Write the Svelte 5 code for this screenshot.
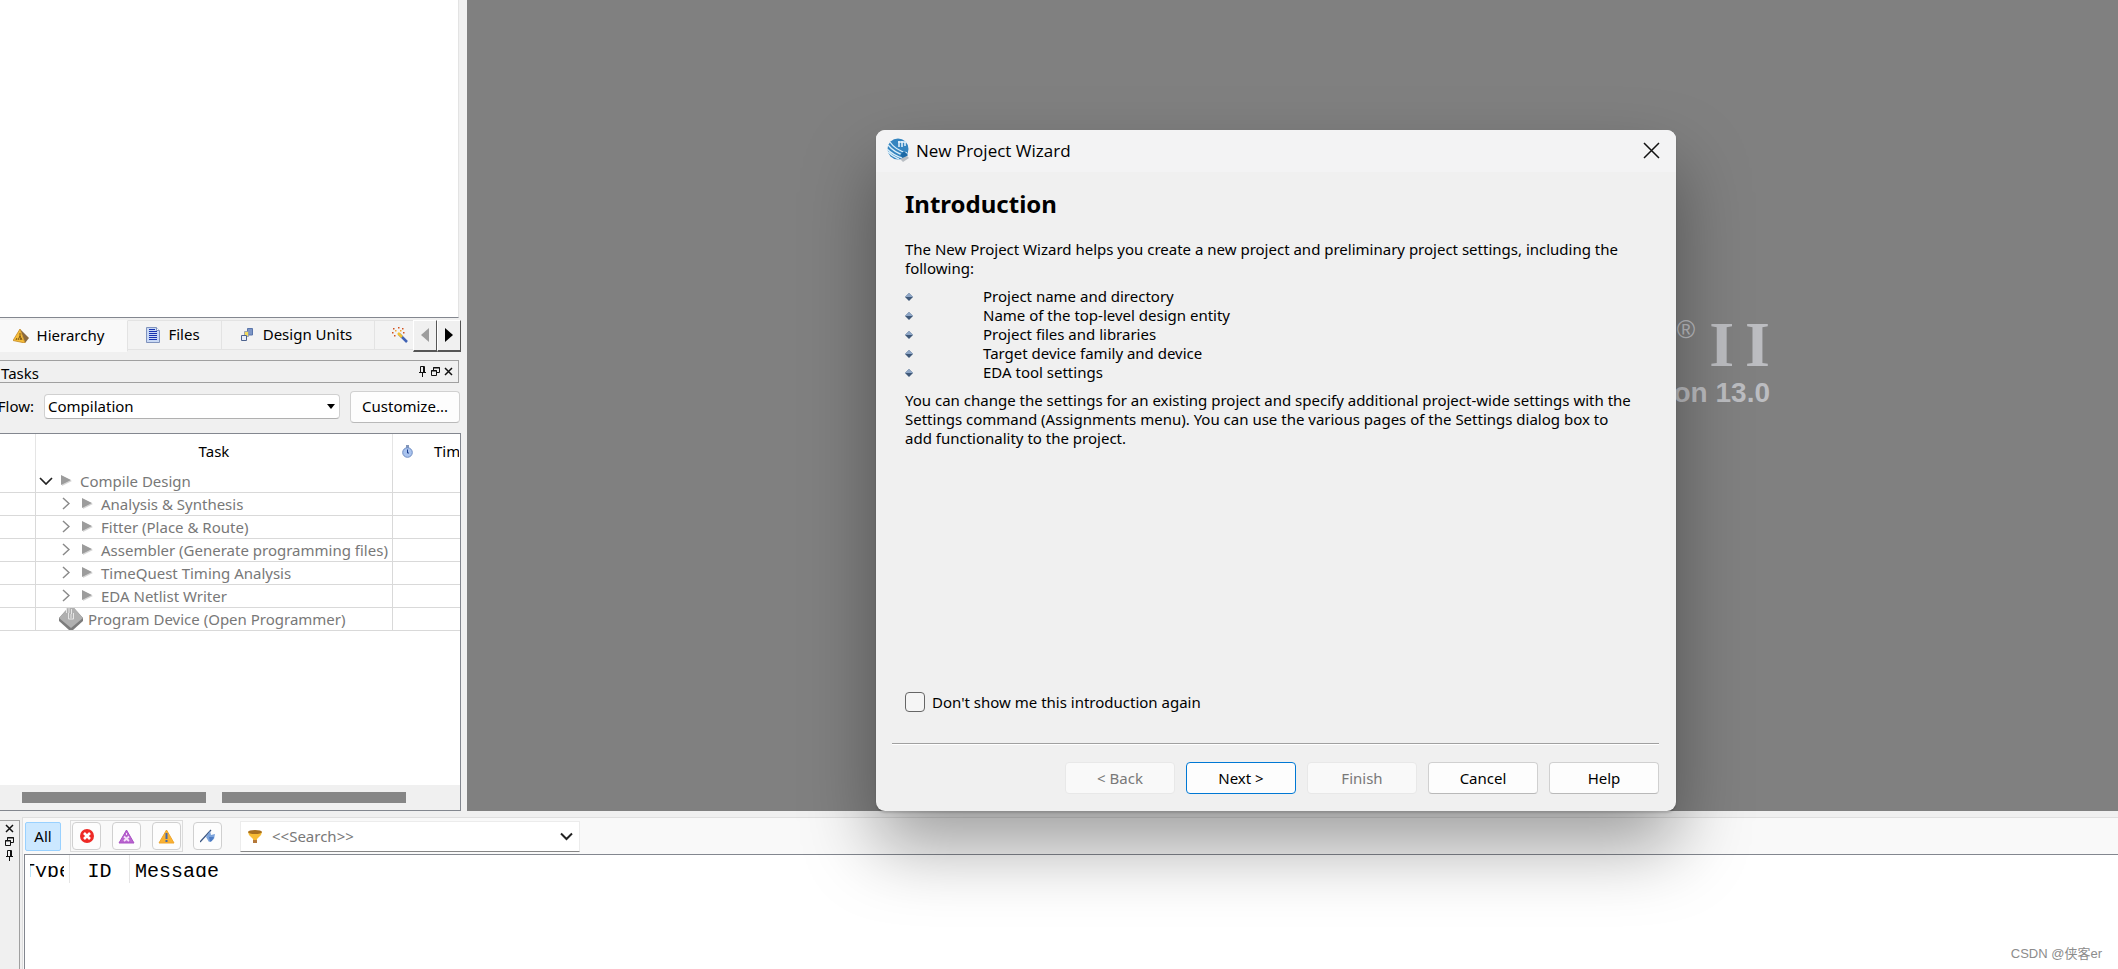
<script lang="ts">
    type Task = { name: string; kind: 'root' | 'step' | 'device' };

    const tasks: Task[] = [
        { name: 'Compile Design', kind: 'root' },
        { name: 'Analysis & Synthesis', kind: 'step' },
        { name: 'Fitter (Place & Route)', kind: 'step' },
        { name: 'Assembler (Generate programming files)', kind: 'step' },
        { name: 'TimeQuest Timing Analysis', kind: 'step' },
        { name: 'EDA Netlist Writer', kind: 'step' },
        { name: 'Program Device (Open Programmer)', kind: 'device' }
    ];

    const topics = [
        'Project name and directory',
        'Name of the top-level design entity',
        'Project files and libraries',
        'Target device family and device',
        'EDA tool settings'
    ];

    let flow = $state('Compilation');
    let search = $state('');
    let skipIntro = $state(false);
    let activeTab = $state('hierarchy');
    let activeFilter = $state('all');
</script>

{#snippet pinIcon()}
    <svg width="9" height="11" viewBox="0 0 9 11" aria-hidden="true">
        <path d="M2.5 6V.5h4V6M5.500 .5V6M1 6.500h7M4.500 6.500V11" fill="none" stroke="#111" />
    </svg>
{/snippet}

{#snippet floatIcon()}
    <svg width="9" height="9" viewBox="0 0 9 9" aria-hidden="true">
        <path d="M2.5 3V.5h6v5H6M2 1h7M.5 3.5h5v5h-5zM0 4h6" fill="none" stroke="#111" />
    </svg>
{/snippet}

{#snippet closeIcon()}
    <svg width="9" height="9" viewBox="0 0 9 9" aria-hidden="true">
        <path d="M1 1l7 7M8 1L1 8" fill="none" stroke="#111" stroke-width="1.5" />
    </svg>
{/snippet}

<div class="app">
    <div class="upper">
        <aside class="side">
            <div class="tree"></div>

            <div class="tabs">
                <button class="tab hierarchy" class:active={activeTab === 'hierarchy'} onclick={() => (activeTab = 'hierarchy')}>
                    <svg width="16" height="14" viewBox="0 0 16 14" aria-hidden="true">
                        <path d="M7 0l9 9-4 5z" fill="#8a6a40" />
                        <path d="M7 0L0 11.500l12 2.500z" fill="#f6bd3a" stroke="#c48a24" stroke-width=".8" />
                        <path d="M7 4v3M7 7l-2 4M7 7l2 4M4 9l-1 2M8 9l-1 2" stroke="#5b3a08" stroke-width=".8" fill="none" />
                    </svg>
                    Hierarchy
                </button>
                <button class="tab files" class:active={activeTab === 'files'} onclick={() => (activeTab = 'files')}>
                    <svg width="14" height="16" viewBox="0 0 14 16" aria-hidden="true">
                        <path d="M.5.5h10l3 3v12H.5z" fill="#c9d9f5" stroke="#8093bd" />
                        <path d="M10.500 .5v3h3" fill="#fff" stroke="#8093bd" />
                        <path d="M3 2.500h6M3 4.500h8M3 6.500h8M3 8.500h8M3 10.500h8M3 12.500h8" stroke="#1733b0" />
                    </svg>
                    Files
                </button>
                <button class="tab units" class:active={activeTab === 'units'} onclick={() => (activeTab = 'units')}>
                    <svg width="12" height="13" viewBox="0 0 12 13" aria-hidden="true">
                        <path d="M6.500 .5h5V7h-5z" fill="#7c95c6" stroke="#5b76ab" />
                        <path d="M3.500 3.500h4v5h-4z" fill="#f5dc5e" stroke="#8796b5" stroke-width=".8" />
                        <path d="M.5 7.500h5v5h-5z" fill="#e9effa" stroke="#4d638e" />
                    </svg>
                    Design Units
                </button>
                <button class="tab wand" aria-label="IP Components">
                    <svg width="16" height="16" viewBox="0 0 16 16" aria-hidden="true">
                        <path d="M7 7l8 8" stroke="#3f62b5" stroke-width="2.500" />
                        <path d="M6 6l4 4" stroke="#f2c230" stroke-width="2.500" />
                        <path d="M1 1h1.500v1.500H1zM6 0h1.500v1.500H6zM10 1h1.500v1.500H10zM0 5h1.500v1.500H0zM11 5h1.500v1.500H11zM2 8h1.500v1.500H2z" fill="#d2531f" />
                        <path d="M3 3h1.500v1.500H3zM8 3h1.500v1.500H8z" fill="#f2a630" />
                    </svg>
                </button>
                <button class="scroller" disabled aria-label="Scroll tabs left">
                    <svg width="8" height="14" viewBox="0 0 8 14" aria-hidden="true"><path d="M8 0v14L0 7z" fill="#9d9d9d" /></svg>
                </button>
                <button class="scroller" aria-label="Scroll tabs right">
                    <svg width="8" height="14" viewBox="0 0 8 14" aria-hidden="true"><path d="M0 0v14l8-7z" fill="#000" /></svg>
                </button>
            </div>

            <header class="dock-title">
                <span>Tasks</span>
                <div class="dock-buttons">
                    <button class="plain" aria-label="Auto hide">{@render pinIcon()}</button>
                    <button class="plain" aria-label="Float">{@render floatIcon()}</button>
                    <button class="plain" aria-label="Close tasks">{@render closeIcon()}</button>
                </div>
            </header>

            <div class="flow">
                <label for="flow">Flow:</label>
                <div class="select-box">
                    <select id="flow" bind:value={flow}>
                        <option>Compilation</option>
                    </select>
                    <svg width="8" height="5" viewBox="0 0 8 5" aria-hidden="true"><path d="M0 0h8L4 5z" fill="#000" /></svg>
                </div>
                <button class="btn">Customize...</button>
            </div>

            <div class="task-view">
                <table class="tasks">
                    <thead>
                        <tr>
                            <th class="mark"></th>
                            <th class="name">Task</th>
                            <th class="time">
                                <div>
                                    <svg width="11" height="13" viewBox="0 0 11 13" aria-hidden="true">
                                        <path d="M4 0h3v3H4z" fill="#8295b8" />
                                        <circle cx="5.500" cy="7.500" r="4.800" fill="#a9c3ee" stroke="#6f8dc2" />
                                        <path d="M5.500 4.500v3.500h1.500" stroke="#1b3c8c" fill="none" />
                                    </svg>
                                    <span>Time</span>
                                </div>
                            </th>
                        </tr>
                    </thead>
                    <tbody>
                        {#each tasks as task}
                            <tr>
                                <td></td>
                                <td>
                                    <div class="task {task.kind}">
                                        {#if task.kind === 'root'}
                                            <svg width="14" height="8" viewBox="0 0 14 8" aria-hidden="true"><path d="M1 1l6 6 6-6" fill="none" stroke="#222" stroke-width="1.700" /></svg>
                                        {:else if task.kind === 'step'}
                                            <svg width="8" height="13" viewBox="0 0 8 13" aria-hidden="true"><path d="M1 1l6 5.500-6 5.500" fill="none" stroke="#8a8a8a" stroke-width="1.500" /></svg>
                                        {/if}
                                        {#if task.kind === 'device'}
                                            <svg width="24" height="22" viewBox="0 0 24 22" aria-hidden="true">
                                                <path d="M9 0h6l9 10v3l-10 9h-4L0 13v-3z" fill="#7c7c7c" />
                                                <path d="M9 0h6l9 10-12 10L0 10z" fill="#b0b0b0" />
                                                <path d="M7.500 0v5M10 0v5M12.500 1v5M9.500 5v6h5V5M12 6v4" stroke="#e6e6e6" fill="none" />
                                            </svg>
                                        {:else}
                                            <svg width="11" height="11" viewBox="0 0 11 11" aria-hidden="true">
                                                <path d="M1 1l10 5-10 5z" fill="#d5d5d5" />
                                                <path d="M0 0l10 5-10 5z" fill="#9c9c9c" />
                                            </svg>
                                        {/if}
                                        <span>{task.name}</span>
                                    </div>
                                </td>
                                <td></td>
                            </tr>
                        {/each}
                    </tbody>
                </table>
                <div class="hscroll">
                    <span></span>
                    <span></span>
                </div>
            </div>
        </aside>

        <main class="workspace">
            <div class="splash">
                <div class="logo"><sup>®</sup><b>I</b><b>I</b></div>
                <div class="version">Version 13.0</div>
            </div>
        </main>
    </div>

    <section class="messages">
        <div class="grip">
            <button class="plain" aria-label="Close messages">{@render closeIcon()}</button>
            <button class="plain" aria-label="Float">{@render floatIcon()}</button>
            <button class="plain" aria-label="Auto hide">{@render pinIcon()}</button>
        </div>

        <div class="message-pane">
            <div class="toolbar">
                <button class="all" class:active={activeFilter === 'all'} onclick={() => (activeFilter = 'all')}>All</button>
                <div class="group">
                    <button class="tool" aria-label="Errors">
                        <svg width="14" height="14" viewBox="0 0 14 14" aria-hidden="true">
                            <circle cx="7" cy="7" r="7" fill="#ee2a26" />
                            <path d="M4 4l6 6M10 4l-6 6" stroke="#fff" stroke-width="2.600" />
                        </svg>
                    </button>
                    <button class="tool" aria-label="Critical warnings">
                        <svg width="17" height="15" viewBox="0 0 17 15" aria-hidden="true">
                            <path d="M8.500 1L16 14H1z" fill="#b965cf" stroke="#a950c4" stroke-linejoin="round" />
                            <path d="M6 7.500l5 4.500M11 7.500L6 12" stroke="#f6e4fa" stroke-width="1.800" />
                            <path d="M8 4h1v2H8z" fill="#f6e4fa" />
                        </svg>
                    </button>
                    <button class="tool" aria-label="Warnings">
                        <svg width="17" height="15" viewBox="0 0 17 15" aria-hidden="true">
                            <path d="M8.500 1L16 14H1z" fill="#f9b233" stroke="#f0a52a" stroke-linejoin="round" />
                            <path d="M7.500 4h2v6h-2zM7.500 11h2v2h-2z" fill="#4568a8" />
                        </svg>
                    </button>
                </div>
                <button class="tool" aria-label="Flagged messages">
                    <svg width="16" height="14" viewBox="0 0 16 14" aria-hidden="true">
                        <path d="M0 13L11 1" stroke="#3a5580" stroke-width="1.200" />
                        <path d="M10 2l1 4 4-1-1 5-5 3-3-5z" fill="#7ba3dc" />
                        <path d="M9 8h5l-2 4-2 1z" fill="#4d7cc4" />
                    </svg>
                </button>
                <div class="search">
                    <svg width="14" height="13" viewBox="0 0 14 13" aria-hidden="true">
                        <path d="M0 2h14l-1 3-4 4v1H5V9L1 5z" fill="#f7bd35" />
                        <ellipse cx="7" cy="2" rx="7" ry="2" fill="#a8701f" />
                        <path d="M5 10h4v3H5z" fill="#b5793a" />
                    </svg>
                    <input type="text" aria-label="Search messages" placeholder="<<Search>>" bind:value={search} />
                    <button class="plain" aria-label="Search history">
                        <svg width="13" height="9" viewBox="0 0 13 9" aria-hidden="true"><path d="M1 1.500l5.500 5.500L12 1.500" fill="none" stroke="#222" stroke-width="2" /></svg>
                    </button>
                </div>
            </div>
            <table class="log">
                <thead>
                    <tr>
                        <th class="type"><div>Type</div></th>
                        <th class="id"><div>ID</div></th>
                        <th class="text"><div>Message</div></th>
                    </tr>
                </thead>
            </table>
        </div>
        <div class="watermark">CSDN @侠客er</div>
    </section>

    <div class="dialog" role="dialog" aria-labelledby="dialog-title">
        <header class="titlebar">
            <svg width="22" height="24" viewBox="0 0 22 24" aria-hidden="true">
                <circle cx="11" cy="11" r="10.500" fill="#3585c0" />
                <path d="M1 7c5 6 10 9 18 11M0 11c5 5 9 7 15 9M3 4c4 6 9 9 17 11M1 14c4 4 7 5 11 7" stroke="#d9eefa" stroke-width="1.300" fill="none" />
                <path d="M12 3v6M15 3v6M18 4v4M11 4h8" stroke="#e8f4fc" stroke-width="1.500" fill="none" />
                <path d="M17 13l4 4-4 4-4-4z" fill="#1d6aa6" />
                <path d="M13 21l7-3 2 2-6 4z" fill="#b9bec3" />
            </svg>
            <span id="dialog-title">New Project Wizard</span>
            <button class="plain" aria-label="Close">
                <svg width="17" height="17" viewBox="0 0 17 17" aria-hidden="true"><path d="M1 1l15 15M16 1L1 16" stroke="#111" stroke-width="1.500" /></svg>
            </button>
        </header>

        <div class="content">
            <h1>Introduction</h1>
            <p>The New Project Wizard helps you create a new project and preliminary project settings, including the following:</p>
            <ul>
                {#each topics as topic}
                    <li>
                        <svg width="8" height="8" viewBox="0 0 8 8" aria-hidden="true">
                            <path d="M4 0l4 4-4 4-4-4z" fill="#3f5878" />
                            <path d="M4 0l4 4H0z" fill="#8ea6c6" />
                        </svg>
                        {topic}
                    </li>
                {/each}
            </ul>
            <p>You can change the settings for an existing project and specify additional project-wide settings with the Settings command (Assignments menu). You can use the various pages of the Settings dialog box to add functionality to the project.</p>
            <label class="skip">
                <input type="checkbox" bind:checked={skipIntro} />
                Don't show me this introduction again
            </label>
        </div>

        <footer>
            <button class="btn" disabled>&lt; Back</button>
            <button class="btn default">Next &gt;</button>
            <button class="btn" disabled>Finish</button>
            <button class="btn">Cancel</button>
            <button class="btn">Help</button>
        </footer>
    </div>
</div>

<style>
    :global(body) {
        margin: 0;
    }

    .app {
        position: relative;
        display: flex;
        flex-direction: column;
        height: 100vh;
        min-height: 900px;
        overflow: hidden;
        background: #f0f0f0;
        font-family: "Noto Sans", "Noto Sans CJK SC", sans-serif;
        font-size: 15px;
        line-height: 19px;
        color: #000;
    }

    .app * {
        box-sizing: border-box;
    }

    button,
    input,
    select {
        font: inherit;
        color: inherit;
        margin: 0;
    }

    svg {
        display: block;
        flex: none;
    }

    .plain {
        display: flex;
        padding: 0;
        border: none;
        background: none;
    }

    .btn {
        height: 32px;
        padding: 0;
        border: 1px solid #d0d0d0;
        border-bottom-color: #b9b9b9;
        border-radius: 4px;
        background: #fdfdfd;
    }

    .btn:disabled {
        border-color: #e8e8e8;
        background: #f9f9f9;
        color: #787878;
    }

    .btn.default {
        border-color: #0078d4;
    }

    .upper {
        flex: 1;
        display: flex;
        min-height: 0;
    }

    /* left docks */
    .side {
        flex: none;
        width: 467px;
        display: flex;
        flex-direction: column;
        padding-right: 6px;
    }

    .tree {
        flex: 318 1 0;
        margin-right: 2px;
        border-bottom: 1px solid #83878f;
        border-right: 1px solid #e3e3e3;
        background: #fff;
    }

    .tabs {
        display: flex;
        align-items: flex-start;
        padding-top: 2px;
        height: 42px;
    }

    .tab {
        display: flex;
        align-items: center;
        justify-content: center;
        gap: 8px;
        height: 30px;
        padding: 0 3px 0 0;
        border: 1px solid #e3e3e3;
        border-left: none;
        background: #f3f3f3;
        overflow: hidden;
    }

    .tab.active {
        height: 32px;
        border-color: #f9f9f9;
        border-right-color: #e3e3e3;
        background: #f9f9f9;
    }

    .hierarchy {
        width: 128px;
        padding-right: 10px;
    }

    .files {
        width: 94px;
    }

    .units {
        width: 153px;
        gap: 10px;
    }

    .wand {
        justify-content: flex-end;
        width: 38px;
        padding-right: 5px;
        border-right: none;
    }

    .scroller {
        display: flex;
        align-items: center;
        justify-content: center;
        width: 24px;
        height: 32px;
        padding: 0;
        border: 1px solid #fff;
        border-right-color: #555;
        border-bottom: 2px solid #555;
        background: #f0f0f0;
    }

    .dock-title {
        display: flex;
        align-items: center;
        justify-content: space-between;
        height: 23px;
        margin-right: 2px;
        padding: 4px 5px 0 1px;
        border: 1px solid #a0a0a0;
        border-left: none;
    }

    .dock-buttons {
        display: flex;
        align-items: center;
        gap: 4px;
        padding-bottom: 4px;
    }

    .flow {
        display: flex;
        align-items: center;
        height: 50px;
        padding: 0 1px 2px 0;
    }

    .flow label {
        display: flex;
        justify-content: flex-end;
        width: 34px;
        margin-right: 10px;
        overflow: hidden;
    }

    .select-box {
        position: relative;
        flex: 1;
        margin-right: 10px;
    }

    .select-box select {
        display: block;
        appearance: none;
        width: 100%;
        height: 25px;
        padding: 0 3px;
        border: 1px solid #d0d0d0;
        border-bottom-color: #b0b0b0;
        border-radius: 4px;
        background: #fff;
    }

    .select-box svg {
        position: absolute;
        right: 5px;
        top: 10px;
        pointer-events: none;
    }

    .flow .btn {
        width: 110px;
    }

    .task-view {
        flex: 378 1 0;
        display: flex;
        flex-direction: column;
        justify-content: space-between;
        min-height: 0;
        border: 1px solid #83878f;
        border-left: none;
        background: #fff;
        overflow: hidden;
    }

    .tasks {
        width: 100%;
        table-layout: fixed;
        border-collapse: separate;
        border-spacing: 0;
    }

    .tasks th {
        height: 36px;
        padding: 0;
        border-right: 1px solid #e5e5e5;
        font-weight: 400;
    }

    .mark {
        width: 36px;
    }

    .time {
        width: 67px;
    }

    .time div {
        display: flex;
        align-items: center;
        gap: 21px;
        padding-left: 9px;
        width: 66px;
        overflow: hidden;
    }

    .tasks td {
        height: 23px;
        padding: 0;
        border-right: 1px solid #d9d9d9;
        border-bottom: 1px solid #d9d9d9;
        color: #787878;
        white-space: nowrap;
    }

    .tasks th:last-child,
    .tasks td:last-child {
        border-right: none;
    }

    .task {
        display: flex;
        align-items: center;
        height: 22px;
    }

    .task span {
        padding-top: 2px;
    }

    .task.root {
        gap: 8px;
        padding-left: 3px;
    }

    .task.step {
        gap: 8px;
        padding-left: 26px;
    }

    .task.step svg + svg {
        margin-left: 4px;
    }

    .task.device {
        gap: 5px;
        padding-left: 23px;
    }

    .hscroll {
        display: flex;
        align-items: center;
        gap: 16px;
        height: 25px;
        padding: 0 54px 0 22px;
        background: #f0f0f0;
    }

    .hscroll span {
        flex: 1;
        height: 11px;
        background: #868686;
    }

    /* workspace */
    .workspace {
        flex: 1;
        display: flex;
        justify-content: flex-end;
        align-items: flex-start;
        padding: 313px 348px 0 0;
        background: #808080;
        color: #bcbdc1;
    }

    .logo {
        display: flex;
        justify-content: flex-end;
        gap: 11px;
        font-family: "Liberation Serif", serif;
        font-size: 64px;
        line-height: 64px;
    }

    .logo sup {
        margin-right: 3px;
        font-family: "Liberation Sans", sans-serif;
        font-size: 25px;
        line-height: 32px;
    }

    .version {
        font-family: "Liberation Sans", sans-serif;
        font-size: 28px;
        font-weight: 700;
        line-height: 32px;
        text-align: right;
    }

    /* messages dock */
    .messages {
        position: relative;
        flex: none;
        display: flex;
        height: 158px;
        padding-top: 6px;
    }

    .grip {
        display: flex;
        flex-direction: column;
        align-items: flex-end;
        gap: 4px;
        width: 20px;
        margin-top: 3px;
        padding: 3px 5px 0 0;
        border: 1px solid #a0a0a0;
        border-left: none;
        border-bottom: none;
    }

    .message-pane {
        flex: 1;
        display: flex;
        flex-direction: column;
        margin-left: 2px;
        border-top: 1px solid #dfdfdf;
        border-left: 1px solid #dfdfdf;
        background: #f9f9f9;
    }

    .toolbar {
        display: flex;
        align-items: center;
        height: 36px;
        padding-left: 2px;
    }

    .all {
        width: 36px;
        height: 29px;
        margin-right: 9px;
        padding: 0;
        border: 1px solid #d0d0d0;
        border-radius: 2px;
        background: #fdfdfd;
    }

    .all.active {
        border-color: #99d1ff;
        background: #cce8ff;
    }

    .group {
        display: flex;
        gap: 11px;
        margin-right: 10px;
        padding: 1px;
        border: 1px solid #dcdcdc;
    }

    .tool {
        display: flex;
        align-items: center;
        justify-content: center;
        width: 29px;
        height: 28px;
        padding: 0;
        border: 1px solid #d0d0d0;
        border-radius: 4px;
        background: #fdfdfd;
    }

    .search {
        display: flex;
        align-items: center;
        gap: 10px;
        width: 340px;
        height: 31px;
        margin-left: 18px;
        padding: 0 6px 0 7px;
        border: 1px solid #ececec;
        border-bottom: 1px solid #868686;
        background: #fff;
    }

    .search input {
        flex: 1;
        min-width: 0;
        padding: 0;
        border: none;
        outline: none;
        background: none;
    }

    .search input::placeholder {
        color: #787878;
        opacity: 1;
    }

    .log {
        flex: 1;
        display: block;
        margin-left: 1px;
        border-top: 1px solid #83878f;
        border-left: 1px solid #83878f;
        border-spacing: 0;
        background: #fff;
        font-family: "Liberation Mono", monospace;
        font-size: 20px;
        line-height: 22px;
    }

    .log th {
        height: 28px;
        padding: 0;
        border-right: 1px solid #e5e5e5;
        font-weight: 400;
    }

    .log th:last-child {
        border-right: none;
    }

    .log div {
        display: flex;
        justify-content: center;
        height: 16px;
        overflow: hidden;
    }

    .log .type {
        width: 45px;
        min-width: 45px;
        padding: 0 5px;
    }

    .log .type div {
        width: 34px;
    }

    .log .id {
        width: 60px;
        min-width: 60px;
    }

    .log .text {
        padding-left: 5px;
    }

    .watermark {
        position: absolute;
        right: 16px;
        bottom: 6px;
        font-family: "Liberation Sans", "Noto Sans CJK SC", sans-serif;
        font-size: 13px;
        color: #8c8c8c;
    }

    /* wizard window */
    .dialog {
        position: absolute;
        left: 876px;
        top: 130px;
        width: 800px;
        height: 681px;
        display: flex;
        flex-direction: column;
        border-radius: 9px;
        background: #f0f0f0;
        box-shadow: 0 2px 2px rgba(0, 0, 0, 0.15), 0 36px 72px rgba(0, 0, 0, 0.36);
    }

    .titlebar {
        display: flex;
        align-items: center;
        gap: 7px;
        height: 42px;
        padding: 0 16px 2px 11px;
        border-radius: 9px 9px 0 0;
        background: #f3f3f4;
        font-family: "Open Sans", sans-serif;
        font-size: 17px;
    }

    .titlebar span {
        flex: 1;
    }

    .content {
        flex: 1;
        display: flex;
        flex-direction: column;
        margin: 0 17px 0 16px;
        padding: 16px 22px 0 13px;
        border-bottom: 1px solid #a0a0a0;
        box-shadow: 0 1px 0 #fff;
    }

    h1 {
        margin: 0 0 20px;
        font-size: 24px;
        line-height: 32px;
    }

    p {
        margin: 0;
    }

    ul {
        margin: 9px 0;
        padding: 0;
        list-style: none;
    }

    li {
        display: flex;
        align-items: center;
        gap: 70px;
    }

    .skip {
        display: flex;
        align-items: center;
        gap: 7px;
        margin-top: auto;
        padding-bottom: 31px;
    }

    .skip input {
        appearance: none;
        width: 20px;
        height: 20px;
        border: 1px solid #666;
        border-radius: 4px;
        background: #f5f5f5;
    }

    .skip input:checked {
        background: #0078d4;
    }

    footer {
        display: flex;
        justify-content: flex-end;
        gap: 11px;
        padding: 18px 17px 17px;
    }

    footer .btn {
        width: 110px;
    }
</style>
